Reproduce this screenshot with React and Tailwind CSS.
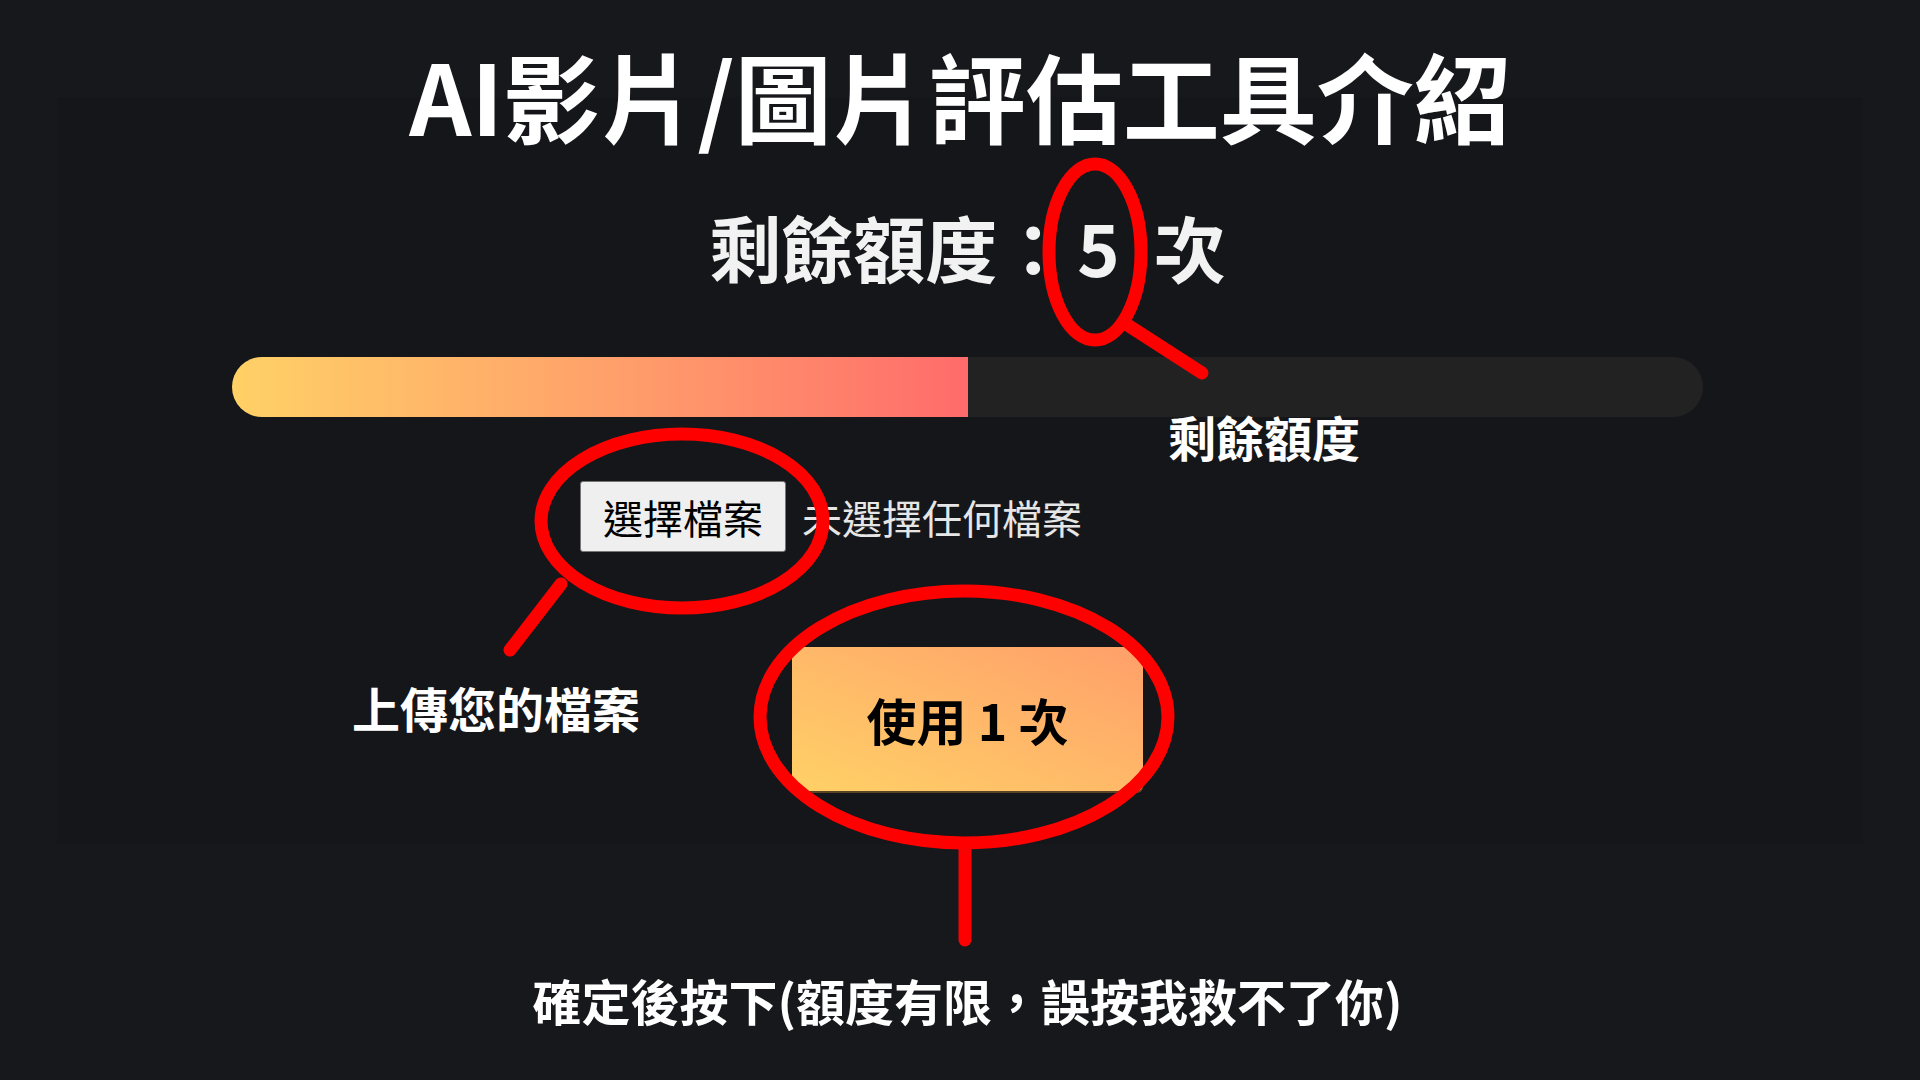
import React from 'react'

const cjk = "font-['Noto_Sans_CJK_TC','Noto_Sans_CJK_SC',sans-serif]"

const remaining = 5
const total = 10

// red hand-drawn style markers laid over the screenshot
const Annotations = () => (
  <svg
    className="absolute inset-0 pointer-events-none"
    width="1920"
    height="1080"
    viewBox="0 0 1920 1080"
    fill="none"
    stroke="#ff0000"
    strokeWidth="13"
    strokeLinecap="round"
  >
    <ellipse cx="1095" cy="252" rx="46" ry="88" />
    <line x1="1126" y1="324" x2="1202" y2="373" />
    <ellipse cx="682" cy="521" rx="141" ry="87" />
    <line x1="561" y1="584" x2="510" y2="650" />
    <ellipse cx="964" cy="717" rx="204" ry="126" />
    <line x1="965" y1="848" x2="965" y2="940" />
  </svg>
)

export default function App() {
  const pct = (remaining / total) * 100

  return (
    <div className={`relative w-[1920px] h-[1080px] overflow-hidden bg-[#17181c] ${cjk}`}>
      <div className="mt-[97px] mx-[57px] h-[747px] bg-[#151619]">
        <div className="ml-[175px] w-[1471px] pt-[113px] flex flex-col">
          <div className="self-center flex items-center text-[72px] leading-none font-bold text-[#f2f2f2]">
            <span>剩餘額度：</span>
            <span className="ml-[8px] mr-[34px]">{remaining}</span>
            <span>次</span>
          </div>

          <div className="mt-[75px] h-[60px] w-full rounded-full bg-[#222222] overflow-hidden">
            <div
              className="h-full bg-linear-to-r from-[#ffd166] to-[#ff6b6b]"
              style={{ width: `${pct}%` }}
            />
          </div>

          <div className="mt-[64px] ml-[348px] flex items-center">
            <button className="h-[71px] px-[22px] bg-[#efefef] border border-[#767676] rounded-[3px] text-[40px] leading-none text-black">
              選擇檔案
            </button>
            <span className="ml-[16px] text-[40px] leading-none text-[#e6e6e6]">未選擇任何檔案</span>
          </div>

          <button className="self-center mt-[95px] w-[351px] h-[144px] rounded-[6px] bg-linear-to-tr from-[#ffd166] to-[#ff9f6a] shadow-[0_2px_0_#5a4325] text-[50px] font-bold leading-none text-black">
            使用 1 次
          </button>
        </div>
      </div>

      <p className="mt-[131px] pl-[15px] text-center text-[49px] leading-none font-bold text-white">
        確定後按下(額度有限，誤按我救不了你)
      </p>

      <h1 className="absolute top-[45px] inset-x-0 text-center text-[97px] leading-none font-bold text-white">
        AI影片/圖片評估工具介紹
      </h1>

      <Annotations />

      <span className="absolute left-[1168px] top-[412px] text-[48px] leading-none font-bold text-white">剩餘額度</span>
      <span className="absolute left-[352px] top-[683px] text-[48px] leading-none font-bold text-white">上傳您的檔案</span>
    </div>
  )
}
